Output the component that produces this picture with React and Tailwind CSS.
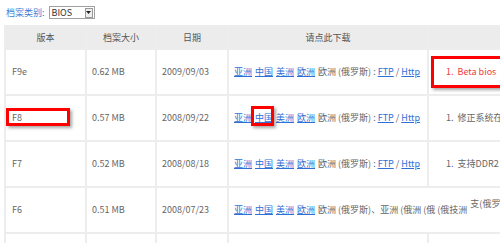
const rows = [
  { ver: 'F9e', size: '0.62 MB', date: '2009/09/03', note: '1.  Beta bios', red: true },
  { ver: 'F8', size: '0.57 MB', date: '2008/09/22', note: '1.  修正系统在Vista下的问题' },
  { ver: 'F7', size: '0.52 MB', date: '2008/08/18', note: '1.  支持DDR2 1066内存' },
]

const regions = ['亚洲', '中国', '美洲', '欧洲']

function Links() {
  return (
    <>
      {regions.map((r) => (
        <a key={r} className="mr-[3px] text-[#2f6fd6] underline underline-offset-1">
          {r}
        </a>
      ))}
    </>
  )
}

function Cell({ children, className = '' }) {
  return (
    <td className={`border-2 border-[#ededed] align-middle whitespace-nowrap overflow-hidden ${className}`}>
      {children}
    </td>
  )
}

export default function App() {
  return (
    <div
      className="relative h-[243px] w-[500px] overflow-hidden bg-white text-[9px] text-[#666]"
      style={{ fontFamily: '"Noto Sans CJK SC", "Noto Sans", sans-serif' }}
    >
      <div className="flex h-[25px] items-start pl-[6px] pt-[6px]">
        <span className="mt-[1px] leading-[12px] text-[#3f7fd9]">档案类别:</span>
        <div className="ml-[4px] flex h-[13px] w-[46px] items-center border border-[#a0a0a0] bg-white">
          <span className="flex-1 pl-[2px] leading-[11px] text-[#333]">BIOS</span>
          <span className="mr-[1px] flex h-[10px] w-[8px] items-center justify-center border border-[#999] bg-[#eee]">
            <svg width="5" height="3" viewBox="0 0 5 3">
              <path d="M0 0h5L2.5 3z" fill="#222" />
            </svg>
          </span>
        </div>
      </div>

      <table className="ml-[4px] w-[560px] table-fixed border-collapse">
        <colgroup>
          <col className="w-[81px]" />
          <col className="w-[70px]" />
          <col className="w-[72px]" />
          <col className="w-[200px]" />
          <col className="w-[137px]" />
        </colgroup>
        <thead>
          <tr className="h-[23px] bg-[#ececec] text-[#555]">
            <Cell className="text-center">版本</Cell>
            <Cell className="text-center">档案大小</Cell>
            <Cell className="text-center">日期</Cell>
            <Cell className="text-center">请点此下载</Cell>
            <Cell />
          </tr>
        </thead>
        <tbody>
          {rows.map((row) => (
            <tr key={row.ver} className="h-[46px]">
              <Cell className="pl-[6px]">{row.ver}</Cell>
              <Cell className="pl-[5px]">{row.size}</Cell>
              <Cell className="pl-[5px]">{row.date}</Cell>
              <Cell className="pl-[5px]">
                <Links />
                欧洲 (俄罗斯) : <a className="text-[#2f6fd6] underline">FTP</a> /{' '}
                <a className="text-[#2f6fd6] underline">Http</a>
              </Cell>
              <Cell className={`pl-[17px] ${row.red ? 'text-[#f03c3c]' : ''}`}>
                <span className="whitespace-pre">{row.note}</span>
              </Cell>
            </tr>
          ))}
          <tr className="h-[46px]">
            <Cell className="pl-[6px]">F6</Cell>
            <Cell className="pl-[5px]">0.51 MB</Cell>
            <Cell className="pl-[5px]">2008/07/23</Cell>
            <td colSpan={2} className="whitespace-nowrap border-2 border-[#ededed] pl-[5px] align-middle">
              <Links />
              欧洲 (俄罗斯)、亚洲 (俄洲 (俄 (俄技洲
              <span className="relative -top-[6px] ml-[3px]">
                支(俄罗斯) : <a className="text-[#2f6fd6] underline">FTP</a>
              </span>
            </td>
          </tr>
          <tr className="h-[46px]">
            <Cell />
            <Cell />
            <Cell />
            <Cell />
            <Cell />
          </tr>
        </tbody>
      </table>

      <div className="absolute left-[6px] top-[108px] h-[18px] w-[64px] border-[3px] border-[#ff0000] shadow-[2px_2px_3px_rgba(0,0,0,0.35)]" />
      <div className="absolute left-[251px] top-[106px] h-[20px] w-[23px] border-[3px] border-[#ff0000] shadow-[2px_2px_3px_rgba(0,0,0,0.35)]" />
      <div className="absolute left-[431px] top-[56px] h-[32px] w-[80px] border-[3px] border-[#ff0000] shadow-[2px_2px_3px_rgba(0,0,0,0.35)]" />
    </div>
  )
}
